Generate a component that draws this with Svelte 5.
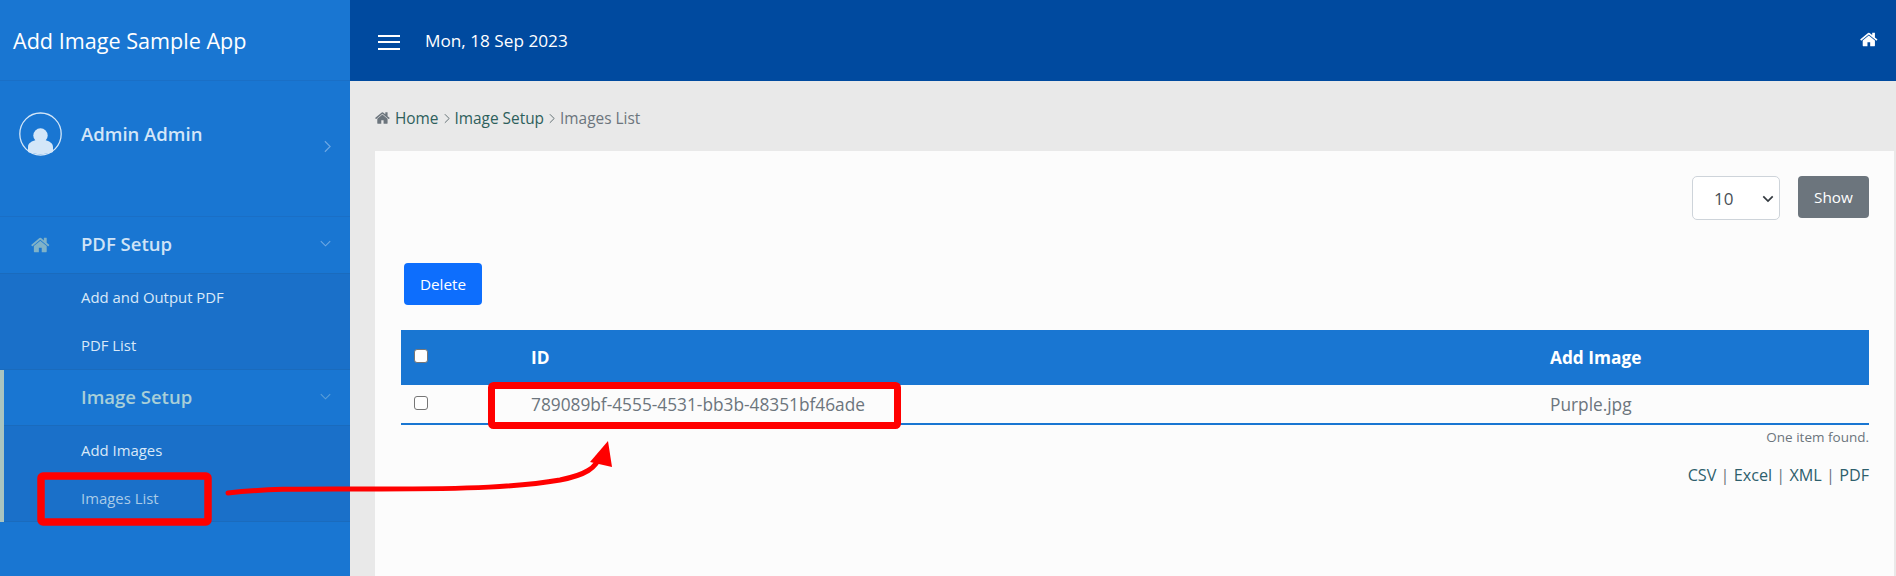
<script>
	const homePath =
		'M1408 992v480q0 26-19 45t-45 19h-384v-384h-256v384h-384q-26 0-45-19t-19-45v-480q0-1 .5-3t.5-3l575-474 575 474q1 2 1 6zm223-69l-62 74q-8 9-21 11h-3q-13 0-21-7l-692-577-692 577q-12 8-24 7-13-2-21-11l-62-74q-8-10-7-23.500t11-21.500l719-599q32-26 76-26t76 26l244 204v-195q0-14 9-23t23-9h192q14 0 23 9t9 23v408l219 182q10 8 11 21.500t-7 23.500z';
</script>

{#snippet home(cls)}
	<svg class={cls} viewBox="0 0 1792 1792" aria-hidden="true"><path d={homePath} fill="currentColor" /></svg>
{/snippet}

{#snippet chevronDown()}
	<svg class="chev-down" viewBox="0 0 14 8" aria-hidden="true"><path d="M1 1l6 6 6-6" fill="none" stroke="currentColor" stroke-width="1.3" /></svg>
{/snippet}

{#snippet crumbSep()}
	<svg class="sep" viewBox="0 0 7 12" aria-hidden="true"><path d="M1 1l5 5-5 5" fill="none" stroke="currentColor" stroke-width="1.100" /></svg>
{/snippet}

<div class="shell">
	<aside class="sidebar">
		<div class="brand">Add Image Sample App</div>

		<div class="user">
			<svg class="avatar" viewBox="0 0 44 44" aria-hidden="true">
				<ellipse cx="21.500" cy="22" rx="20.700" ry="21" fill="none" stroke="#d3e6f8" stroke-width="1.300" />
				<circle cx="21.500" cy="23.500" r="7.200" fill="#d3e6f8" />
				<path d="M9 40v-5c0-4 4-6 8-7l4.500 2 4.500-2c4 1 8 3 8 7v5c-4 1.500-8 2-12.500 2S13 41.500 9 40z" fill="#d3e6f8" />
			</svg>
			<span class="user-name">Admin Admin</span>
			<svg class="chev-right" viewBox="0 0 8 14" aria-hidden="true"><path d="M1 1l6 6-6 6" fill="none" stroke="currentColor" stroke-width="1.300" /></svg>
		</div>

		<nav>
			<div class="group">
				<div class="group-head">
					{@render home('group-icon')}
					<span class="group-title">PDF Setup</span>
					{@render chevronDown()}
				</div>
				<ul class="sub">
					<li>Add and Output PDF</li>
					<li>PDF List</li>
				</ul>
			</div>
			<div class="group active">
				<div class="group-head">
					<span class="group-title">Image Setup</span>
					{@render chevronDown()}
				</div>
				<ul class="sub">
					<li>Add Images</li>
					<li class="dim">Images List</li>
				</ul>
			</div>
		</nav>
	</aside>

	<div class="main">
		<header class="topbar">
			<button class="burger" aria-label="Menu"><span></span><span></span><span></span></button>
			<span class="date">Mon, 18 Sep 2023</span>
			{@render home('top-home')}
		</header>

		<div class="content">
			<p class="crumbs">
				{@render home('crumb-home')}
				<a href="#home">Home</a>
				{@render crumbSep()}
				<a href="#setup">Image Setup</a>
				{@render crumbSep()}
				<span class="current">Images List</span>
			</p>

			<section class="card">
				<div class="pager">
					<div class="select-wrap">
						<select>
							<option>10</option>
							<option>25</option>
							<option>50</option>
						</select>
						<svg class="select-arrow" viewBox="0 0 14 9" aria-hidden="true"><path d="M1.500 1.500L7 7l5.500-5.500" fill="none" stroke="#343a40" stroke-width="2" /></svg>
					</div>
					<button class="btn show">Show</button>
				</div>

				<button class="btn delete">Delete</button>

				<table>
					<thead>
						<tr>
							<th class="check"><input type="checkbox" /></th>
							<th class="id">ID</th>
							<th>Add Image</th>
						</tr>
					</thead>
					<tbody>
						<tr>
							<td class="check"><input type="checkbox" /></td>
							<td class="id">789089bf-4555-4531-bb3b-48351bf46ade</td>
							<td>Purple.jpg</td>
						</tr>
					</tbody>
				</table>

				<p class="found">One item found.</p>
				<p class="export">
					<a href="#csv">CSV</a> <span>|</span> <a href="#excel">Excel</a> <span>|</span>
					<a href="#xml">XML</a> <span>|</span> <a href="#pdf">PDF</a>
				</p>
			</section>
		</div>
	</div>

	<!-- annotation drawn over the screenshot -->
	<svg class="annotation" viewBox="0 0 1896 576" aria-hidden="true">
		<rect x="41" y="476" width="167" height="46" rx="2" fill="none" stroke="#ff0000" stroke-width="7.500" />
		<rect x="491.500" y="385.500" width="406" height="40" rx="2" fill="none" stroke="#ff0000" stroke-width="7" />
		<path
			d="M228 493 C 270 488 310 489 380 489 C 470 489 520 487 560 480 C 585 475 597 468 600 455"
			fill="none"
			stroke="#ff0000"
			stroke-width="5"
			stroke-linecap="round"
		/>
		<path d="M608 441 L590 462 L612 467 Z" fill="#ff0000" />
	</svg>
</div>

<style>
	:global(body) {
		margin: 0;
		background: #e9e9e9;
	}

	.shell {
		position: relative;
		display: flex;
		width: 1896px;
		height: 576px;
		overflow: hidden;
		font-family: 'Open Sans', 'Noto Sans', sans-serif;
	}

	.sidebar {
		flex: 0 0 350px;
		background: #1976d2;
		color: #fff;
	}

	.brand {
		height: 80px;
		padding-left: 13px;
		line-height: 82px;
		font-size: 21.600px;
		border-bottom: 1px solid #1a6fc6;
	}

	.user {
		position: relative;
		height: 135px;
		border-bottom: 1px solid #1a6fc6;
	}

	.avatar {
		position: absolute;
		left: 19px;
		top: 31px;
		width: 44px;
		height: 44px;
	}

	.user-name {
		position: absolute;
		left: 81px;
		top: 40px;
		font-size: 18.500px;
		font-weight: 600;
		line-height: 26px;
		color: #d3e6f8;
	}

	.chev-right {
		position: absolute;
		left: 324px;
		top: 59px;
		width: 7px;
		height: 13px;
		color: #6ea8e4;
	}

	.group-head {
		display: flex;
		align-items: center;
		height: 56px;
		padding: 0 18px 0 31px;
		border-bottom: 1px solid #1a6bbd;
	}

	.group-icon {
		width: 20px;
		height: 20px;
		margin-right: 30px;
		color: #7fb2c8;
	}

	.group-title {
		flex: 1;
		margin-top: -3px;
		font-size: 18.500px;
		font-weight: 600;
		color: #cfe3f6;
	}

	.chev-down {
		width: 11px;
		height: 7px;
		margin-right: 1px;
		margin-top: -3px;
		color: #6ea8e4;
	}

	.sub {
		list-style: none;
		margin: 0;
		padding: 0;
		height: 95px;
		background: #1a70c9;
		border-bottom: 1px solid #1a6bbd;
	}

	.sub li {
		height: 48px;
		padding-left: 81px;
		line-height: 46px;
		font-size: 14.900px;
		color: #d9e9f8;
	}

	.sub li.dim {
		color: #a9cbe8;
	}

	.active {
		border-left: 4px solid #a9c4c0;
	}

	.active .group-head {
		height: 55px;
		padding-left: 77px;
	}

	.active .group-title {
		margin-top: -2px;
		color: #a8cfd8;
	}

	.active .sub li {
		padding-left: 77px;
		line-height: 48px;
	}

	.active .chev-down {
		color: #5c9fd8;
	}

	.main {
		flex: 1;
		min-width: 0;
		display: flex;
		flex-direction: column;
	}

	.topbar {
		display: flex;
		align-items: center;
		flex: 0 0 81px;
		padding: 0 17px 0 28px;
		background: #004a9f;
		color: #fff;
	}

	.burger {
		display: flex;
		flex-direction: column;
		justify-content: space-between;
		width: 22px;
		height: 15px;
		margin: 3px 25px 0 0;
		padding: 0;
		border: 0;
		background: none;
	}

	.burger span {
		height: 2px;
		background: #fff;
	}

	.date {
		flex: 1;
		font-size: 17.200px;
	}

	.top-home {
		width: 19px;
		height: 19px;
		margin-top: -3px;
	}

	.content {
		flex: 1;
		display: flex;
		flex-direction: column;
		min-height: 0;
		padding: 0 2px 0 25px;
	}

	.crumbs {
		display: flex;
		align-items: center;
		flex: 0 0 70px;
		margin: 0;
		padding-top: 4px;
		box-sizing: border-box;
		font-size: 15.400px;
		color: #6c757d;
	}

	.crumbs a {
		color: #2e5f5c;
		text-decoration: none;
	}

	.crumb-home {
		width: 16px;
		height: 16px;
		margin-right: 4px;
		color: #6c757d;
	}

	.sep {
		width: 6px;
		height: 11px;
		margin: 1px 5px 0;
		color: #5d6b70;
	}

	.card {
		flex: 1;
		padding: 25px 25px 0 26px;
		background: #fcfcfc;
	}

	.pager {
		display: flex;
		justify-content: flex-end;
		gap: 18px;
	}

	.select-wrap {
		position: relative;
	}

	select {
		display: block;
		appearance: none;
		width: 88px;
		height: 44px;
		padding: 0 0 0 21px;
		border: 1px solid #ced4da;
		border-radius: 5px;
		background: #fff;
		font: inherit;
		font-size: 17px;
		color: #495057;
	}

	.select-arrow {
		position: absolute;
		right: 6px;
		top: 19px;
		width: 12px;
		height: 8px;
		pointer-events: none;
	}

	.btn {
		height: 42px;
		border: 0;
		border-radius: 4px;
		color: #fff;
		font: inherit;
		font-size: 15.300px;
	}

	.show {
		width: 71px;
		background: #6c757d;
	}

	.delete {
		display: block;
		width: 78px;
		margin: 43px 0 25px 3px;
		background: #0d6efd;
	}

	table {
		width: 100%;
		border-collapse: collapse;
		table-layout: fixed;
		font-size: 17.300px;
	}

	thead tr {
		height: 55px;
		background: #1976d2;
		color: #fff;
	}

	th {
		padding: 0;
		text-align: left;
		font-weight: 700;
	}

	tbody tr {
		height: 39px;
		border-bottom: 2px solid #1976d2;
		color: #6c757d;
	}

	td {
		padding: 1px 0 0;
	}

	.check {
		width: 130px;
		padding-left: 13px;
		box-sizing: border-box;
	}

	.id {
		width: 1019px;
	}

	input[type='checkbox'] {
		display: block;
		appearance: none;
		width: 14px;
		height: 14px;
		margin: -4px 0 0;
		border: 1px solid #767676;
		border-radius: 3px;
		background: #fff;
	}

	.found {
		margin: 3px 0 0;
		text-align: right;
		font-size: 13.500px;
		line-height: 18px;
		color: #6c757d;
	}

	.export {
		margin: 17px 0 0;
		text-align: right;
		font-size: 16.200px;
		line-height: 24px;
		color: #6c757d;
	}

	.export a {
		color: #2e5f6c;
		text-decoration: none;
	}

	.annotation {
		position: absolute;
		inset: 0;
		width: 1896px;
		height: 576px;
		pointer-events: none;
	}
</style>
